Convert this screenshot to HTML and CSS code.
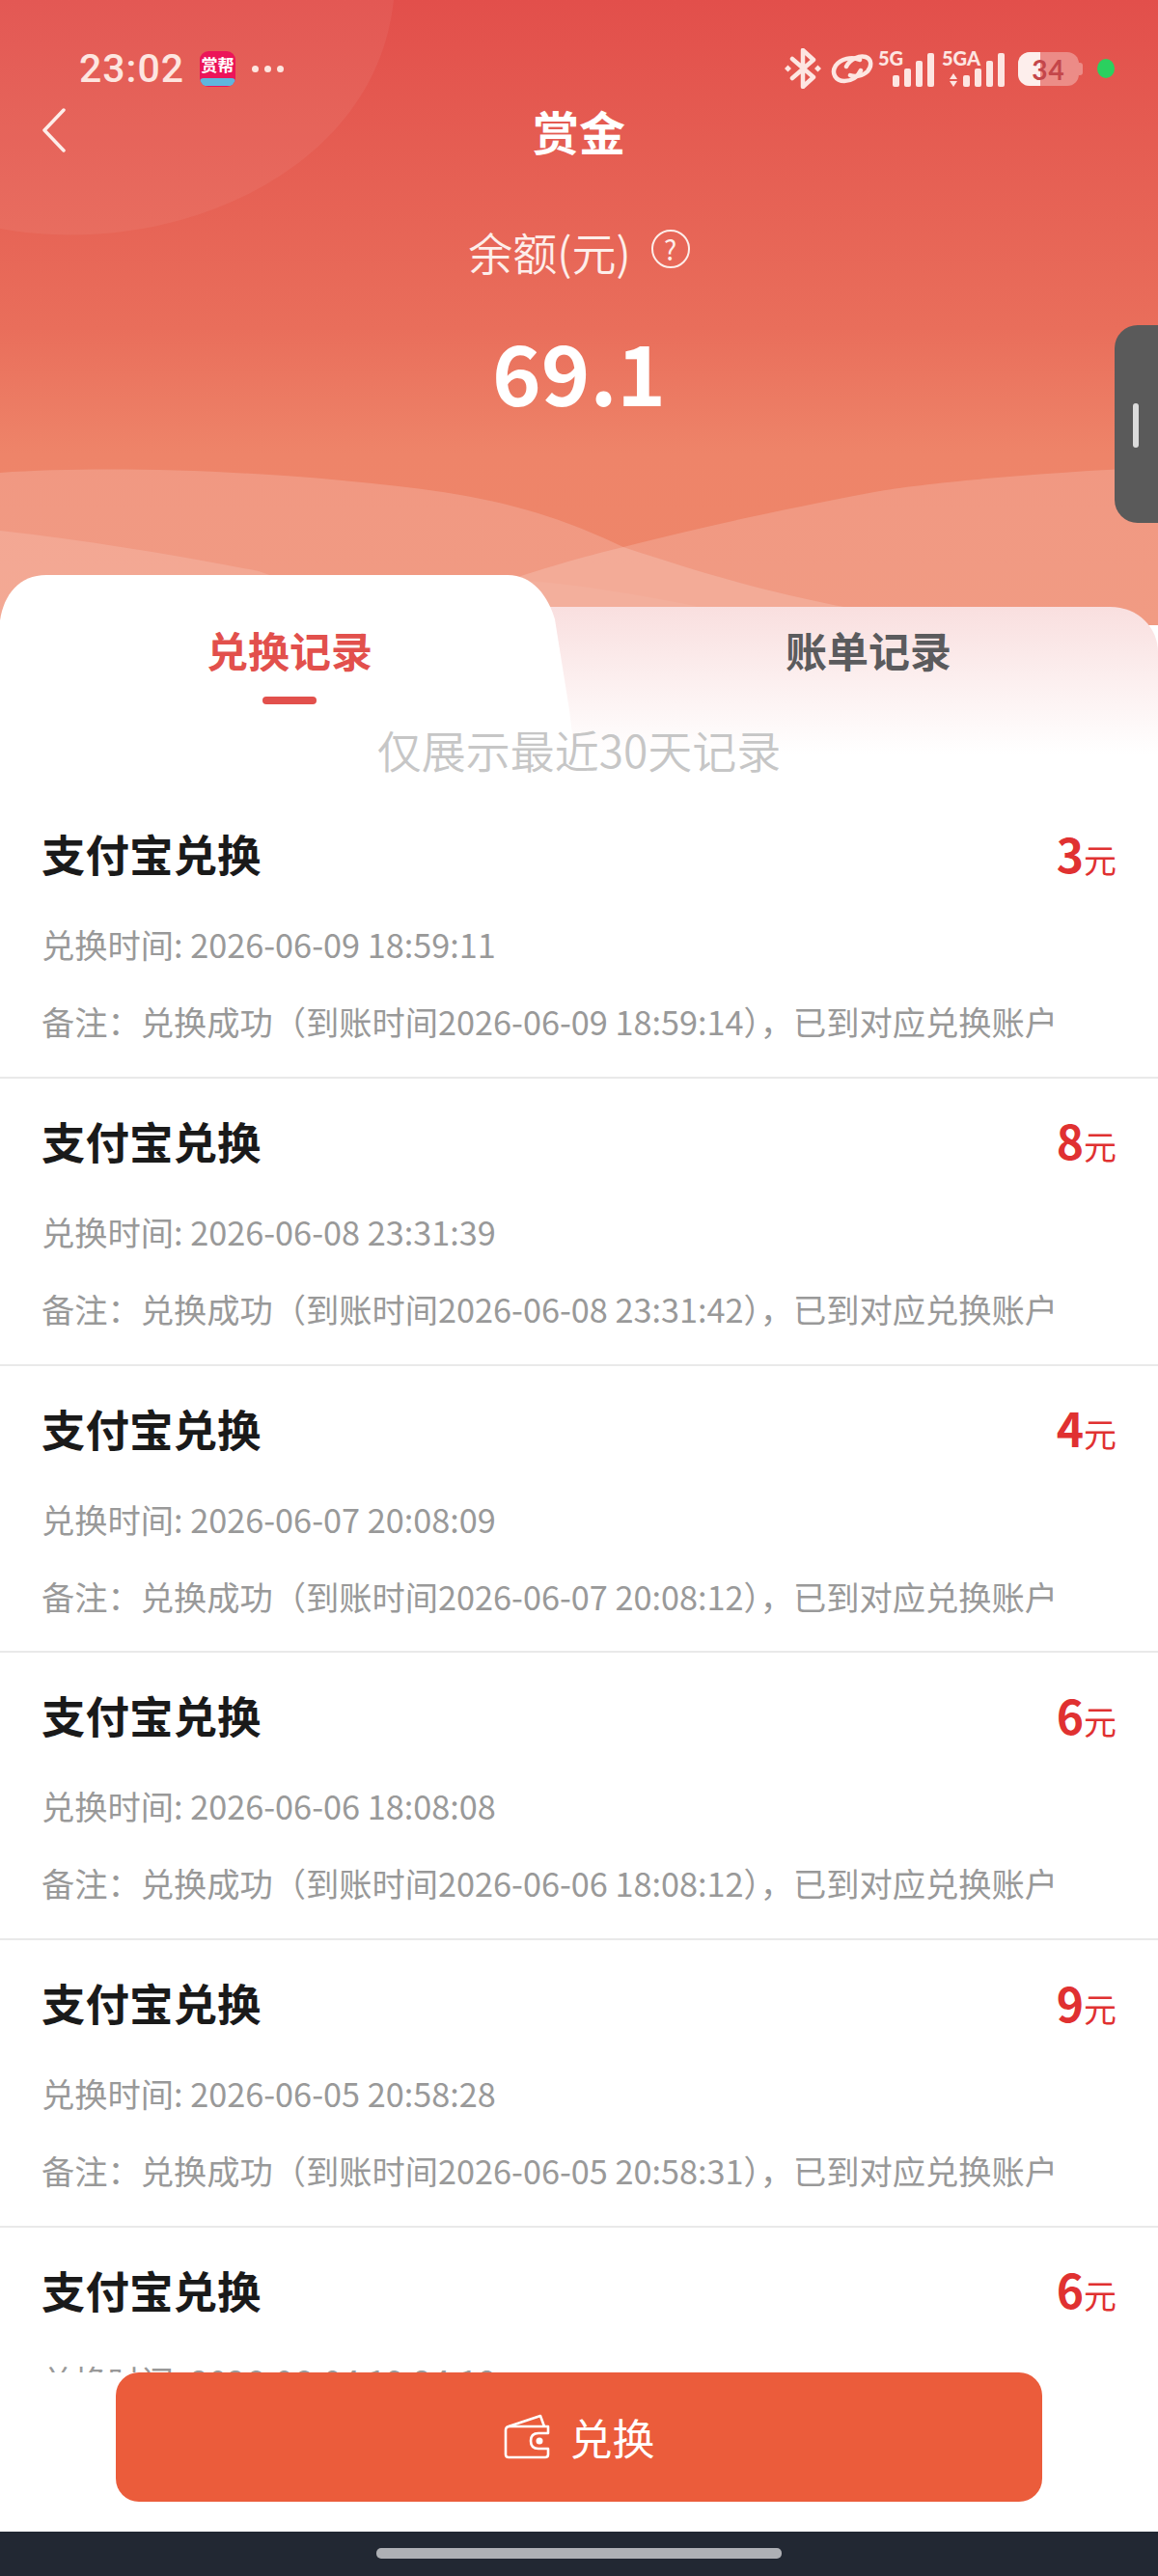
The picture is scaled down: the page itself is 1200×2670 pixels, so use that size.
FILE: index.html
```html
<!DOCTYPE html>
<html>
<head>
	<meta charset="utf-8">
	<title>赏金</title>
	<link rel="stylesheet" href="styles.css">
</head>
<body>
<div class="page">
	<div class="hero">
		<svg class="hero-bg" viewBox="0 0 1200 650" width="1200" height="650">
			<path d="M0 237C60 248 130 245 191 227C300 195 395 120 408 0H0Z" fill="#fff" fill-opacity=".055"/>
			<path d="M0 490C120 482 300 488 459 510C560 525 620 555 646 567C730 595 800 615 880 630L900 650H0Z" fill="#fff" fill-opacity=".17"/>
			<path d="M1200 484C1080 490 960 500 906 510C800 530 720 548 646 567C600 578 560 590 500 610V650H1200Z" fill="#fff" fill-opacity=".17"/>
			<path d="M0 550C90 560 180 575 268 592L320 610L300 650H0Z" fill="#fff" fill-opacity=".14"/>
			<path d="M500 600C560 600 640 612 720 628L760 650H500Z" fill="#fff" fill-opacity=".05"/>
		</svg>

		<div class="status">
			<div class="status-left">
				<span class="clock">23:02</span>
				<span class="app-icon">
					<span class="app-name">赏帮</span>
					<span class="app-band"></span>
				</span>
				<span class="dots"><i></i><i></i><i></i></span>
			</div>
			<div class="status-right">
				<svg width="38" height="42" viewBox="0 0 38 42" class="st-bt">
					<path d="M8 11L30 30L19 40V2L30 12L8 31" fill="none" stroke="#fde6e2" stroke-width="4.5" stroke-linejoin="round" stroke-linecap="round"/>
					<path d="M0 21l3.500-3.500 3.500 3.500-3.500 3.500zM31 21l3.500-3.500 3.500 3.500-3.500 3.500z" fill="#fde6e2"/>
				</svg>
				<svg width="44" height="32" viewBox="0 0 44 32" class="st-link">
					<path d="M30 7C22 3 10 6 5 13C0 21 5 29 14 29C21 29 28 25 31 18" fill="none" stroke="#fde6e2" stroke-width="4.5" stroke-linecap="round"/>
					<path d="M16 14C20 6 30 2 36 4C42 6 43 13 38 19C33 24 25 25 20 23" fill="none" stroke="#fde6e2" stroke-width="4.5" stroke-linecap="round"/>
				</svg>
				<span class="signal">
					<span class="net">5G</span>
					<span class="bars"><i class="b1"></i><i class="b2"></i><i class="b3"></i><i class="b4"></i></span>
				</span>
				<span class="signal signal-a">
					<span class="net">5GA</span>
					<span class="bars"><em class="updown"></em><i class="b1"></i><i class="b2"></i><i class="b3"></i><i class="b4"></i></span>
				</span>
				<span class="battery">
					<span class="battery-body">
						<span class="battery-fill"></span>
						<span class="battery-num">34</span>
					</span>
				</span>
				<span class="green-dot"></span>
			</div>
		</div>

		<div class="nav">
			<svg class="back" width="30" height="46" viewBox="0 0 30 46">
				<path d="M25 2L5 23L25 44" fill="none" stroke="#fdeeea" stroke-width="3.500" stroke-linecap="round" stroke-linejoin="round"/>
			</svg>
			<span class="nav-title">赏金</span>
		</div>

		<div class="balance">
			<span>余额(元)</span>
			<span class="help">?</span>
		</div>
		<div class="amount">69.1</div>
	</div>

	<div class="handle"><i></i></div>

	<div class="tabs">
		<svg class="tab-shape" width="1200" height="224" viewBox="0 0 1200 224">
			<defs>
				<linearGradient id="tabfade" x1="0" y1="0" x2="0" y2="1">
					<stop offset="0" stop-color="#f9dfdf"/>
					<stop offset=".8" stop-color="#fff"/>
				</linearGradient>
			</defs>
			<path d="M540 33H1150C1180 33 1200 55 1200 80V224H540Z" fill="url(#tabfade)"/>
			<path d="M0 47C4 20 20 0 48 0H526C552 0 568 22 575 46L590 140L600 224H0Z" fill="#fff"/>
		</svg>
		<div class="tab-row">
			<div class="tab tab-on">兑换记录<i></i></div>
			<div class="tab">账单记录</div>
		</div>
		<div class="notice">仅展示最近30天记录</div>
	</div>

	<div class="list">
		<div class="row">
			<div class="row-head"><span class="row-title">支付宝兑换</span><span class="row-money"><b>3</b>元</span></div>
			<div class="row-time">兑换时间: 2026-06-09 18:59:11</div>
			<div class="row-note">备注：兑换成功（到账时间2026-06-09 18:59:14），已到对应兑换账户</div>
		</div>
		<div class="row">
			<div class="row-head"><span class="row-title">支付宝兑换</span><span class="row-money"><b>8</b>元</span></div>
			<div class="row-time">兑换时间: 2026-06-08 23:31:39</div>
			<div class="row-note">备注：兑换成功（到账时间2026-06-08 23:31:42），已到对应兑换账户</div>
		</div>
		<div class="row">
			<div class="row-head"><span class="row-title">支付宝兑换</span><span class="row-money"><b>4</b>元</span></div>
			<div class="row-time">兑换时间: 2026-06-07 20:08:09</div>
			<div class="row-note">备注：兑换成功（到账时间2026-06-07 20:08:12），已到对应兑换账户</div>
		</div>
		<div class="row">
			<div class="row-head"><span class="row-title">支付宝兑换</span><span class="row-money"><b>6</b>元</span></div>
			<div class="row-time">兑换时间: 2026-06-06 18:08:08</div>
			<div class="row-note">备注：兑换成功（到账时间2026-06-06 18:08:12），已到对应兑换账户</div>
		</div>
		<div class="row">
			<div class="row-head"><span class="row-title">支付宝兑换</span><span class="row-money"><b>9</b>元</span></div>
			<div class="row-time">兑换时间: 2026-06-05 20:58:28</div>
			<div class="row-note">备注：兑换成功（到账时间2026-06-05 20:58:31），已到对应兑换账户</div>
		</div>
		<div class="row">
			<div class="row-head"><span class="row-title">支付宝兑换</span><span class="row-money"><b>6</b>元</span></div>
			<div class="row-time">兑换时间: 2026-06-04 19:24:18</div>
		</div>
	</div>

	<div class="footer">
		<div class="footer-inner">
			<a href="javascript:;" class="btn">
				<svg width="48" height="48" viewBox="0 0 48 48">
					<path d="M2 17Q2 13 6 13H46V20H36Q28 20 28 28Q28 36 36 36H46V42Q46 45 43 45H5Q2 45 2 42Z" fill="none" stroke="#fff" stroke-width="2.600" stroke-linejoin="round"/>
					<path d="M5 13L38 2L42 13" fill="none" stroke="#fff" stroke-width="2.600" stroke-linejoin="round"/>
					<circle cx="37" cy="28" r="3.500" fill="#fff"/>
				</svg>
				<span>兑换</span>
			</a>
		</div>
		<div class="home-bar"><i></i></div>
	</div>
</div>
</body>
</html>
```
FILE: styles.css
```css
*{margin: 0; padding: 0; box-sizing: border-box;}
body{
	width: 1200px;
	font-family: "Noto Sans CJK SC", "Noto Sans", sans-serif;
	background: #fff;
}
i,em{display: block; font-style: normal;}
.page{
	width: 1200px; height: 2670px;
	position: relative;
	overflow: hidden;
	background: #fff;
}

/* top red part */
.hero{
	height: 648px;
	position: relative;
	background: linear-gradient(180deg, #e24f4b 0, #e96e5b 340px, #ee8469 470px, #ee876a 648px);
	color: #fff;
	text-align: center;
}
.hero-bg{position: absolute; left: 0; top: 0;}
.status{
	height: 100px;
	padding: 42px 45px 0 82px;
	display: flex;
	justify-content: space-between;
	position: relative;
}
.status-left, .status-right{display: flex; align-items: center; height: 58px;}
.clock{
	font-family: "Roboto", sans-serif;
	font-size: 41px; font-weight: 500;
	color: #fde6e0;
	letter-spacing: 1px;
}
.app-icon{
	width: 37px; height: 37px;
	margin-left: 16px;
	border-radius: 9px;
	overflow: hidden;
	background: #ec1459;
	display: flex; flex-direction: column;
	align-items: center;
}
.app-name{font-size: 17px; line-height: 28px; height: 28px; font-weight: 700; color: #fff; white-space: nowrap;}
.app-band{width: 100%; height: 8px; background: #5fb6de; border-radius: 4px;}
.dots{display: flex; gap: 6px; margin-left: 17px;}
.dots i{width: 7px; height: 7px; border-radius: 50%; background: #fde6e0;}

.st-bt{margin-right: 10px;}
.st-link{margin-right: 5px;}
.signal{
	width: 58px; height: 38px;
	margin-right: 8px;
	position: relative;
}
.signal-a{width: 65px; margin-right: 14px;}
.net{
	position: absolute; left: 0; top: -2px;
	font-family: "Lato", sans-serif;
	font-size: 20px; line-height: 20px; font-weight: 900;
	color: #fde6e2;
}
.bars{
	position: absolute; right: 0; bottom: 0;
	display: flex; align-items: flex-end; gap: 4.500px;
}
.bars i{width: 7.500px; background: #fde6e2; border-radius: 2px;}
.bars .b1{height: 12px;}
.bars .b2{height: 19px;}
.bars .b3{height: 27px;}
.bars .b4{height: 35px;}
.updown{
	width: 8px; height: 14px;
	margin-right: 1px;
	background: #fde6e2;
	clip-path: polygon(50% 0, 100% 42%, 0 42%, 0 58%, 100% 58%, 50% 100%, 0 58%, 0 42%);
}
.battery{
	width: 67px; height: 35px;
	padding-right: 4px;
	position: relative;
	display: block;
}
.battery::after{
	content: "";
	position: absolute; right: 0; top: 11px;
	width: 4px; height: 13px;
	border-radius: 0 3px 3px 0;
	background: rgba(255,255,255,.32);
}
.battery-body{
	display: block;
	height: 35px;
	position: relative;
	border-radius: 12px;
	background: rgba(255,255,255,.32);
	overflow: hidden;
}
.battery-fill{
	position: absolute; left: 0; top: 0; bottom: 0;
	width: 23px;
	background: #fdeeec;
}
.battery-num{
	position: absolute; left: 0; right: 0; top: 0;
	text-align: center;
	font-family: "Lato", sans-serif;
	font-size: 28px; line-height: 36px; font-weight: 700;
	color: #c4464a;
	letter-spacing: 1px;
}
.green-dot{
	width: 18px; height: 20px;
	margin-left: 15px;
	border-radius: 50%;
	background: #2bd05f;
}

.nav{
	height: 76px;
	padding-bottom: 6px;
	position: relative;
	display: flex; align-items: center; justify-content: center;
}
.back{position: absolute; left: 41px; top: 12px;}
.nav-title{font-size: 48px; font-weight: 700; line-height: 70px;}

.balance{
	height: 60px;
	margin-top: 54px;
	display: flex; align-items: center; justify-content: center; gap: 21px;
	position: relative;
	font-size: 46px;
	font-weight: 350;
	color: #fdeeea;
}
.help{
	width: 40px; height: 40px;
	margin-top: -4px;
	border: 2px solid #fdeeea;
	border-radius: 50%;
	font-size: 28px; line-height: 36px; font-weight: 400;
	text-align: center;
}
.amount{
	height: 110px;
	margin-top: 39px;
	position: relative;
	font-size: 86px; line-height: 110px; font-weight: 700;
	color: #fff;
}

.handle{
	position: absolute; right: 0; top: 337px;
	width: 45px; height: 205px;
	background: #5a5a5a;
	border-radius: 24px 0 0 24px;
}
.handle i{
	position: absolute; left: 19px; top: 81px;
	width: 6px; height: 46px;
	border-radius: 3px;
	background: #dcdcdc;
}

/* tabs */
.tabs{
	height: 224px;
	margin-top: -52px;
	position: relative;
}
.tab-shape{position: absolute; left: 0; top: 0;}
.tab-row{
	display: grid;
	grid-template-columns: 600px 600px;
	padding-top: 47px;
	position: relative;
}
.tab{
	text-align: center;
	font-size: 43px; line-height: 60px; font-weight: 700;
	color: #5b5b5d;
	height: 85px;
}
.tab-on{color: #e2504c;}
.tab-on i{
	width: 56px; height: 8px;
	margin: 19px auto 0;
	border-radius: 4px;
	background: #e2504c;
}
.notice{
	position: relative;
	text-align: center;
	font-size: 46px; line-height: 60px; font-weight: 350;
	color: #c6c6c6;
	margin-top: 18px;
}

/* records */
.row{
	padding: 37px 43px 34.750px;
	border-bottom: 2px solid #e9e9e9;
}
.row-head{
	height: 60px;
	display: flex; justify-content: space-between; align-items: center;
}
.row-title{font-size: 45.500px; line-height: 60px; font-weight: 700; color: #1a1a1a; margin-top: -6px;}
.row-money{font-size: 34px; line-height: 60px; color: #e03131;}
.row-money b{font-size: 48px; font-weight: 700;}
.row-time, .row-note{
	font-size: 34.250px; line-height: 46px;
	color: #999;
	white-space: nowrap;
}
.row-time{margin-top: 38px;}
.row-note{margin-top: 34px;}

/* bottom */
.footer{
	position: absolute; left: 0; right: 0; bottom: 0;
}
.footer-inner{
	height: 165px;
	padding: 0 120px;
	background: #fff;
}
.btn{
	height: 134px;
	display: flex; align-items: center; justify-content: center; gap: 21px;
	border-radius: 24px;
	background: #eb5c3b;
	color: #fff;
	font-size: 44px;
	text-decoration: none;
}
.home-bar{
	height: 46px;
	background: #222833;
	display: flex; justify-content: center;
	padding-top: 17px;
}
.home-bar i{width: 420px; height: 11px; border-radius: 5px; background: #aeb0b5;}
```
